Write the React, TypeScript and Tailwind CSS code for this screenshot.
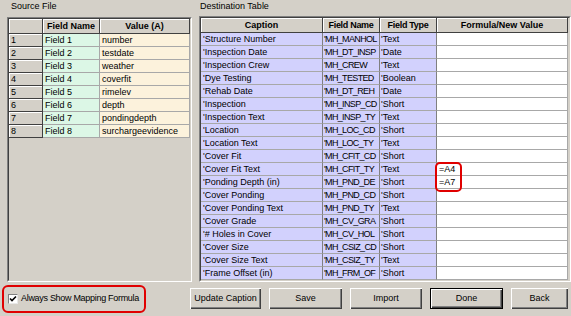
import React from 'react';

const sourceRows: [string, string][] = [
    ['Field 1', 'number'],
    ['Field 2', 'testdate'],
    ['Field 3', 'weather'],
    ['Field 4', 'coverfit'],
    ['Field 5', 'rimelev'],
    ['Field 6', 'depth'],
    ['Field 7', 'pondingdepth'],
    ['Field 8', 'surchargeevidence'],
];

const destRows: [string, string, string, string][] = [
    ["'Structure Number", "'MH_MANHOL", "'Text", ''],
    ["'Inspection Date", "'MH_DT_INSP", "'Date", ''],
    ["'Inspection Crew", "'MH_CREW", "'Text", ''],
    ["'Dye Testing", "'MH_TESTED", "'Boolean", ''],
    ["'Rehab Date", "'MH_DT_REH", "'Date", ''],
    ["'Inspection", "'MH_INSP_CD", "'Short", ''],
    ["'Inspection Text", "'MH_INSP_TY", "'Text", ''],
    ["'Location", "'MH_LOC_CD", "'Short", ''],
    ["'Location Text", "'MH_LOC_TY", "'Text", ''],
    ["'Cover Fit", "'MH_CFIT_CD", "'Short", ''],
    ["'Cover Fit Text", "'MH_CFIT_TY", "'Text", '=A4'],
    ["'Ponding Depth (in)", "'MH_PND_DE", "'Short", '=A7'],
    ["'Cover Ponding", "'MH_PND_CD", "'Short", ''],
    ["'Cover Ponding Text", "'MH_PND_TY", "'Text", ''],
    ["'Cover Grade", "'MH_CV_GRA", "'Short", ''],
    ["'# Holes in Cover", "'MH_CV_HOL", "'Short", ''],
    ["'Cover Size", "'MH_CSIZ_CD", "'Short", ''],
    ["'Cover Size Text", "'MH_CSIZ_TY", "'Text", ''],
    ["'Frame Offset (in)", "'MH_FRM_OF", "'Short", ''],
];

// raised header cell, classic windows look
const headCell =
    'h-[15px] shrink-0 bg-[#d4d0c8] font-bold text-center leading-[14px] whitespace-nowrap overflow-hidden border-r border-b border-[#404040] shadow-[inset_1px_1px_#ffffff]';
const dataCell =
    'h-[13px] shrink-0 px-[2px] leading-[12px] whitespace-nowrap overflow-hidden border-r border-b border-[#a8a8a8]';

function SunkenBox({ children, className }: { children: React.ReactNode; className?: string }) {
    return (
        <div className={`flex-1 border-t border-l border-[#808080] border-r border-b border-r-white border-b-white ${className ?? ''}`}>
            <div className="h-full border-t border-l border-[#404040] border-r border-b border-r-[#d4d0c8] border-b-[#d4d0c8] overflow-hidden">
                {children}
            </div>
        </div>
    );
}

function Button({ label, isDefault, width }: { label: string; isDefault?: boolean; width: string }) {
    return (
        <div
            className={`${width} h-[21px] shrink-0 flex items-center justify-center bg-[#d4d0c8] ${
                isDefault
                    ? 'border border-black shadow-[inset_1px_1px_#ffffff,inset_-1px_-1px_#404040,inset_-2px_-2px_#808080]'
                    : 'shadow-[inset_1px_1px_#ffffff,inset_-1px_-1px_#404040,inset_-2px_-2px_#808080]'
            }`}
        >
            {label}
        </div>
    );
}

export default function App() {
    return (
        <div className="w-[571px] h-[316px] overflow-hidden bg-[#d4d0c8] text-black text-[9px] font-['Liberation_Sans',Arial,sans-serif] flex flex-col">
            <div className="flex h-[282px]">
                {/* Source file grid */}
                <div className="ml-[7px] w-[185px] flex flex-col">
                    <div className="h-[17px] pl-[4px] leading-[12px]">Source File</div>
                    <SunkenBox>
                        <div className="flex">
                            <div className={`${headCell} w-[34px]`} />
                            <div className={`${headCell} w-[57px]`}>Field Name</div>
                            <div className={`${headCell} w-[90px]`}>Value (A)</div>
                        </div>
                        {sourceRows.map(([name, value], i) => (
                            <div key={name} className="flex">
                                <div className="w-[34px] h-[13px] shrink-0 bg-[#d4d0c8] pl-[2px] leading-[12px] border-r border-b border-[#404040] shadow-[inset_1px_1px_#ffffff]">
                                    {i + 1}
                                </div>
                                <div className={`${dataCell} w-[57px] bg-[#dcf7e6]`}>{name}</div>
                                <div className={`${dataCell} w-[90px] bg-[#fcf2dc]`}>{value}</div>
                            </div>
                        ))}
                    </SunkenBox>
                </div>

                {/* Destination grid */}
                <div className="ml-[7px] flex-1 flex flex-col">
                    <div className="h-[17px] pl-[1px] leading-[12px]">Destination Table</div>
                    <SunkenBox className="relative">
                        <div className="flex">
                            <div className={`${headCell} w-[122px]`}>Caption</div>
                            <div className={`${headCell} w-[57px] tracking-[-0.3px]`}>Field Name</div>
                            <div className={`${headCell} w-[57px] tracking-[-0.3px]`}>Field Type</div>
                            <div className={`${headCell} w-[131px]`}>Formula/New Value</div>
                        </div>
                        {destRows.map(([caption, field, type, formula]) => (
                            <div key={field} className="flex">
                                <div className={`${dataCell} w-[122px] bg-[#d2d1fd] border-r-[#808080]`}>{caption}</div>
                                <div className={`${dataCell} w-[57px] bg-[#d2d1fd] border-r-[#808080] pl-[1px] pr-0 tracking-[-0.65px]`}>{field}</div>
                                <div className={`${dataCell} w-[57px] bg-[#d2d1fd] border-r-[#808080] pl-[1px]`}>{type}</div>
                                <div className={`${dataCell} w-[131px] bg-white`}>{formula}</div>
                            </div>
                        ))}
                        {/* annotation around the formulas */}
                        <div className="absolute left-[235px] top-[145px] w-[27px] h-[30px] border-2 border-[#e00000] rounded-[5px]" />
                    </SunkenBox>
                </div>
            </div>

            <div className="flex items-start">
                <div className="ml-[2px] mt-[3px] w-[144px] h-[28px] border-2 border-[#e00000] rounded-[6px] flex items-center pl-[4px] gap-[3px] whitespace-nowrap">
                    <div className="w-[10px] h-[10px] shrink-0 bg-white border-t border-l border-[#808080] border-r border-b border-r-[#e8e8e8] border-b-[#e8e8e8] flex items-center justify-center">
                        <svg width="8" height="8" viewBox="0 0 8 8">
                            <path d="M1 3.5 L3 5.5 L7 1.5" stroke="black" strokeWidth="1.6" fill="none" />
                        </svg>
                    </div>
                    <span className="text-[9px] tracking-[-0.3px]">Always Show Mapping Formula</span>
                </div>
                <div className="ml-[44px] mt-[6px] flex gap-[8px]">
                    <Button label="Update Caption" width="w-[71px]" />
                    <Button label="Save" width="w-[73px]" />
                    <Button label="Import" width="w-[72px]" />
                    <Button label="Done" width="w-[73px]" isDefault />
                    <Button label="Back" width="w-[57px]" />
                </div>
            </div>
        </div>
    );
}
